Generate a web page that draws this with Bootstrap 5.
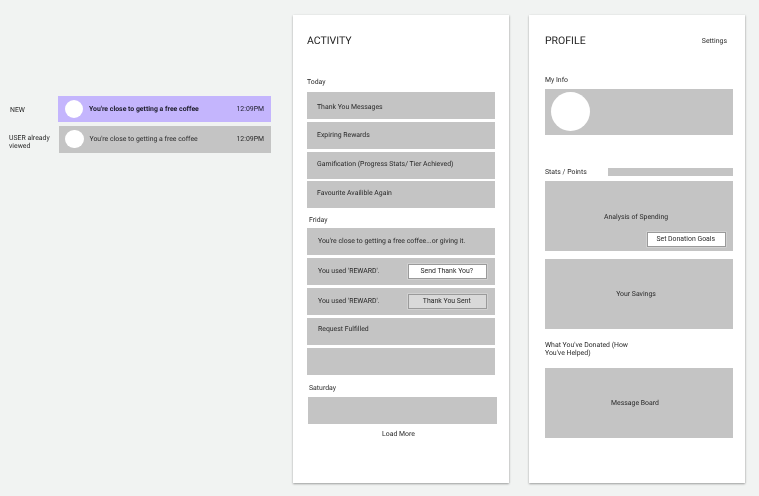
<!DOCTYPE html>
<html lang="en">
<head>
<meta charset="utf-8">
<title>Activity and Profile wireframes</title>
<link href="https://cdn.jsdelivr.net/npm/bootstrap@5.3.0/dist/css/bootstrap.min.css" rel="stylesheet">
<style>
html,body{height:100%}
body{background:#f1f3f2;font-family:Roboto,"Liberation Sans",sans-serif;font-size:6.9px;line-height:8px;color:#2a2a2a;overflow:hidden;text-rendering:geometricPrecision}
.stage{width:759px;height:496px;padding:15px 14px 13px 0;will-change:transform}
.legend{width:293px;padding-top:81px}
.note-line{height:26px;margin-bottom:4px}
.note-label{width:58px;padding:5px 4px 0 9px}
.note-label-new{padding:2px 4px 0 10px}
.note-bar{width:213px;height:26px;padding:0 7px 0 6.5px}
.note-new{background:#c4b5fd;color:#1c1c2a}
.note-new strong{font-weight:700}
.grey-shift{margin-left:1px;width:212px;padding-left:6px}
.dot{width:18.5px;height:18.5px;border-radius:50%;background:#fff;margin-right:6px}
.sheet{width:216px;height:468px;background:#fff;box-shadow:0 1px 2px rgba(0,0,0,.35),1px 0 2px rgba(0,0,0,.06)}
.sheet-activity{padding:0 14px;margin-right:20px}
.sheet-profile{padding:0 12px 0 16px}
.sheet-head{font-size:10.5px;line-height:13px;color:#1c1c1c;padding-top:19px}
.activity-today{margin-top:30.5px;height:8px}
.block{background:#c4c4c4;color:#2a2a2a;height:27px;margin-bottom:3px}
.block-pad{padding:0 10px}
.block-wide{padding:0 8px 0 11px}
.block-wide.block-top,.block-pad.block-top{padding-top:7.5px}
.day-label{padding-left:2px}
.day-friday{margin-top:8px;margin-bottom:3.5px}
.day-saturday{margin-top:9.5px;margin-bottom:4.5px}
.today-first{margin-top:6.5px;padding-top:3.5px}
.row-mid{padding-bottom:2px}
.row-upper{padding-bottom:3px}
.row-tight{margin-bottom:2px}
.block-offset{margin-left:1px;width:189px}
.load-more{padding-right:5px;margin-top:6.5px}
.flat-btn{width:79px;height:15px;background:#fff;border:1px solid #9a9a9a;color:#2a2a2a;font-size:6.9px;line-height:13px;padding:0 1.5px 0 0;border-radius:0;box-shadow:0 0 0 .5px #ddd}
.flat-btn-done{background:#d9d9d9}
.settings-link{color:#2a2a2a;padding:22px 6px 0 0;font-size:6.9px}
.info-label{margin-top:29px}
.info-box{height:45.5px;margin-top:5px;padding-left:6px;background:#c4c4c4}
.info-dot{width:39px;height:39px;border-radius:50%;background:#fff}
.stats-row{margin-top:33.5px;height:8px}
.stats-bar{width:125px;height:7.5px;background:#c4c4c4}
.tile{background:#c4c4c4;color:#2a2a2a;height:70px}
.tile-first{margin-top:5px;margin-bottom:8px;padding:32px 0 0}
.tile-second{height:69.5px}
.tile-btn{width:79px;margin:11px 7px 0 auto}
.donated{width:90px;margin:12.5px 0 11px;height:16px}
.tile-nudge{padding-right:6px}
.tile-nudge-more{padding-right:8px}
</style>
</head>
<body>
<div class="stage d-flex">
  <div class="legend flex-shrink-0">
    <div class="note-line d-flex align-items-center">
      <div class="note-label note-label-new">NEW</div>
      <div class="note-bar note-new d-flex align-items-center">
        <span class="dot flex-shrink-0"></span>
        <strong class="flex-grow-1">You're close to getting a free coffee</strong>
        <span>12:09PM</span>
      </div>
    </div>
    <div class="note-line d-flex align-items-center">
      <div class="note-label">USER already viewed</div>
      <div class="note-bar grey-shift block mb-0 d-flex align-items-center">
        <span class="dot flex-shrink-0"></span>
        <span class="flex-grow-1">You're close to getting a free coffee</span>
        <span>12:09PM</span>
      </div>
    </div>
  </div>

  <section class="sheet sheet-activity flex-shrink-0">
    <div class="sheet-head">ACTIVITY</div>
    <div class="activity-today">Today</div>
    <div class="block block-pad today-first d-flex align-items-center">Thank You Messages</div>
    <div class="block block-pad row-mid d-flex align-items-center">Expiring Rewards</div>
    <div class="block block-pad row-upper row-tight d-flex align-items-center">Gamification (Progress Stats/ Tier Achieved)</div>
    <div class="block block-pad block-top">Favourite Availible Again</div>
    <div class="day-label day-friday">Friday</div>
    <div class="block block-wide d-flex align-items-center">You're close to getting a free coffee...or giving it.</div>
    <div class="block block-wide d-flex align-items-center justify-content-between">
      <span>You used 'REWARD'.</span>
      <button type="button" class="btn flat-btn">Send Thank You?</button>
    </div>
    <div class="block block-wide d-flex align-items-center justify-content-between">
      <span>You used 'REWARD'.</span>
      <button type="button" class="btn flat-btn flat-btn-done">Thank You Sent</button>
    </div>
    <div class="block block-wide block-top">Request Fulfilled</div>
    <div class="block"></div>
    <div class="day-label day-saturday">Saturday</div>
    <div class="block block-offset mb-0"></div>
    <div class="load-more text-center">Load More</div>
  </section>

  <section class="sheet sheet-profile flex-shrink-0">
    <div class="d-flex justify-content-between align-items-start">
      <div class="sheet-head">PROFILE</div>
      <a class="settings-link text-decoration-none">Settings</a>
    </div>
    <div class="info-label">My Info</div>
    <div class="info-box d-flex align-items-center">
      <span class="info-dot"></span>
    </div>
    <div class="stats-row d-flex justify-content-between align-items-center">
      <span>Stats / Points</span>
      <span class="stats-bar"></span>
    </div>
    <div class="tile tile-first">
      <div class="text-center tile-nudge">Analysis of Spending</div>
      <button type="button" class="btn flat-btn tile-btn d-block">Set Donation Goals</button>
    </div>
    <div class="tile tile-second tile-nudge d-flex align-items-center justify-content-center">Your Savings</div>
    <div class="donated">What You've Donated (How You've Helped)</div>
    <div class="tile tile-nudge-more d-flex align-items-center justify-content-center">Message Board</div>
  </section>
</div>
<script src="https://cdn.jsdelivr.net/npm/bootstrap@5.3.0/dist/js/bootstrap.bundle.min.js"></script>
</body>
</html>
